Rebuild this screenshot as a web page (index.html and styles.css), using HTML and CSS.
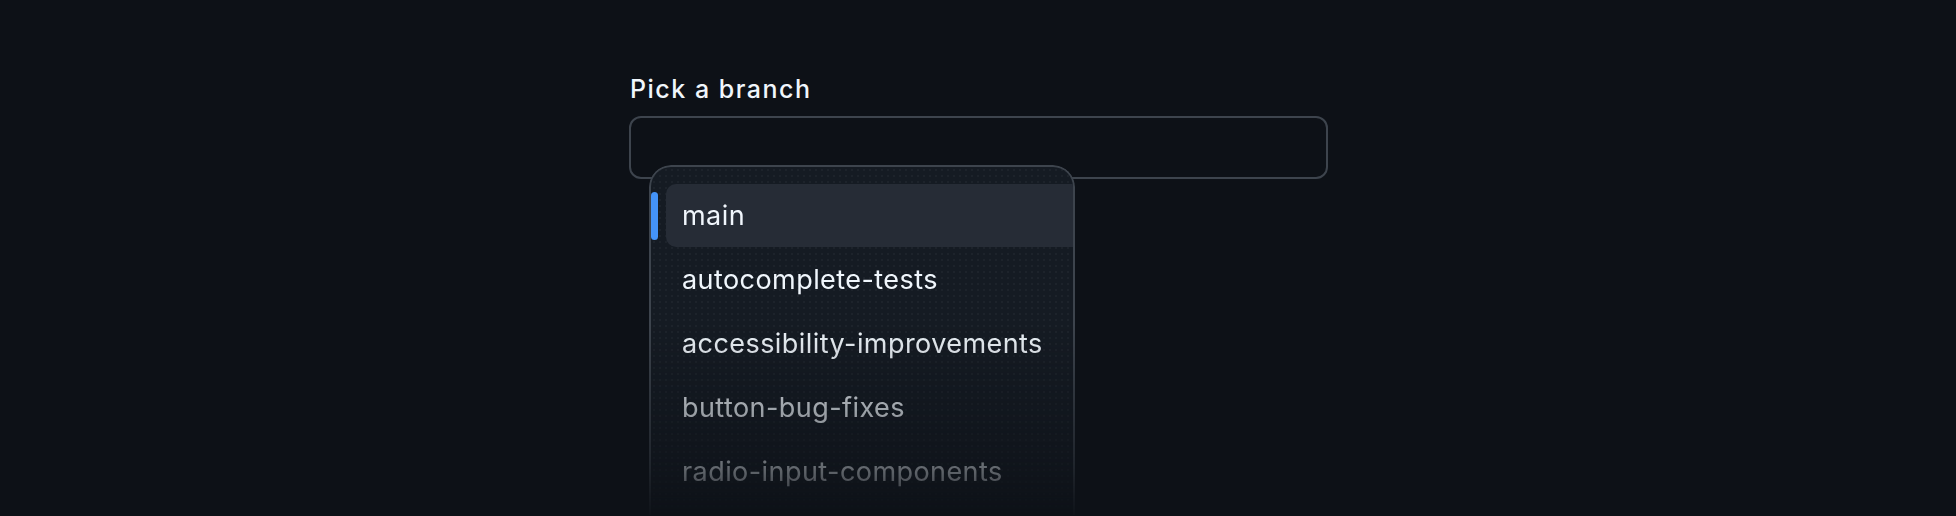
FILE: index.html
```html
<!DOCTYPE html>
<html lang="en">
<head>
<meta charset="utf-8">
<title>Pick a branch</title>
<link rel="stylesheet" href="styles.css">
</head>
<body>
  <main class="page">
    <div class="field">
      <label class="label" for="branch">Pick a branch</label>
      <div class="combo">
        <input class="input" id="branch" type="text" autocomplete="off">
        <div class="menu">
          <ul class="list">
            <li class="item is-active"><span class="indicator"></span><span class="item-bg">main</span></li>
            <li class="item"><span class="item-bg">autocomplete-tests</span></li>
            <li class="item"><span class="item-bg">accessibility-improvements</span></li>
            <li class="item"><span class="item-bg">button-bug-fixes</span></li>
            <li class="item"><span class="item-bg">radio-input-components</span></li>
          </ul>
        </div>
      </div>
    </div>
  </main>
</body>
</html>
```

FILE: styles.css
```css
* { box-sizing: border-box; }
html, body {
  margin: 0;
  height: 100%;
  background: #0d1117;
  overflow: hidden;
}
body {
  font-family: Inter, "Noto Sans", "Liberation Sans", sans-serif;
  color: #f0f6fc;
}
.page {
  padding: 71px 0 0 629px;
}
.field {
  width: 699px;
  display: flex;
  flex-direction: column;
  gap: 9px;
}
.label {
  font-size: 25px;
  font-weight: 550;
  letter-spacing: 0.06em;
  line-height: 36px;
  color: #f0f6fc;
  padding-left: 1px;
}
.combo {
  position: relative;
}
.input {
  display: block;
  width: 100%;
  height: 63px;
  background: #0d1117;
  border: 2px solid #3d444d;
  border-radius: 12px;
  outline: none;
  color: #f0f6fc;
  font: inherit;
  font-size: 26px;
  padding: 0 20px;
}
.menu {
  position: absolute;
  left: 20px;
  top: 49px;
  width: 426px;
  height: 350px;
  border: 2px solid #3d444d;
  border-bottom: none;
  border-radius: 22px 22px 0 0;
  background-color: #151b23;
  background-image: radial-gradient(rgba(255,255,255,0.035) 0.8px, transparent 1px);
  background-size: 6px 6px;
  overflow: hidden;
  -webkit-mask-image: linear-gradient(to bottom, #000 0, #000 160px, rgba(0,0,0,0.4) 300px, rgba(0,0,0,0.05) 350px);
  mask-image: linear-gradient(to bottom, #000 0, #000 160px, rgba(0,0,0,0.4) 300px, rgba(0,0,0,0.05) 350px);
}
.list {
  list-style: none;
  margin: 0;
  padding: 17px 0 0 15px;
  display: flex;
  flex-direction: column;
  gap: 1px;
}
.item {
  position: relative;
  height: 63px;
  display: flex;
  align-items: center;
}
.item-bg {
  flex: 1;
  height: 100%;
  display: flex;
  align-items: center;
  padding-left: 16px;
  margin-right: -20px;
  border-radius: 10px;
  font-size: 27px;
  letter-spacing: 0.016em;
  line-height: 1;
  color: #f0f6fc;
  white-space: nowrap;
}
.is-active .item-bg {
  background: #262c36;
}
.indicator {
  position: absolute;
  left: -15px;
  top: 8px;
  width: 7px;
  height: 48px;
  border-radius: 4px;
  background: #4493f8;
}
```
